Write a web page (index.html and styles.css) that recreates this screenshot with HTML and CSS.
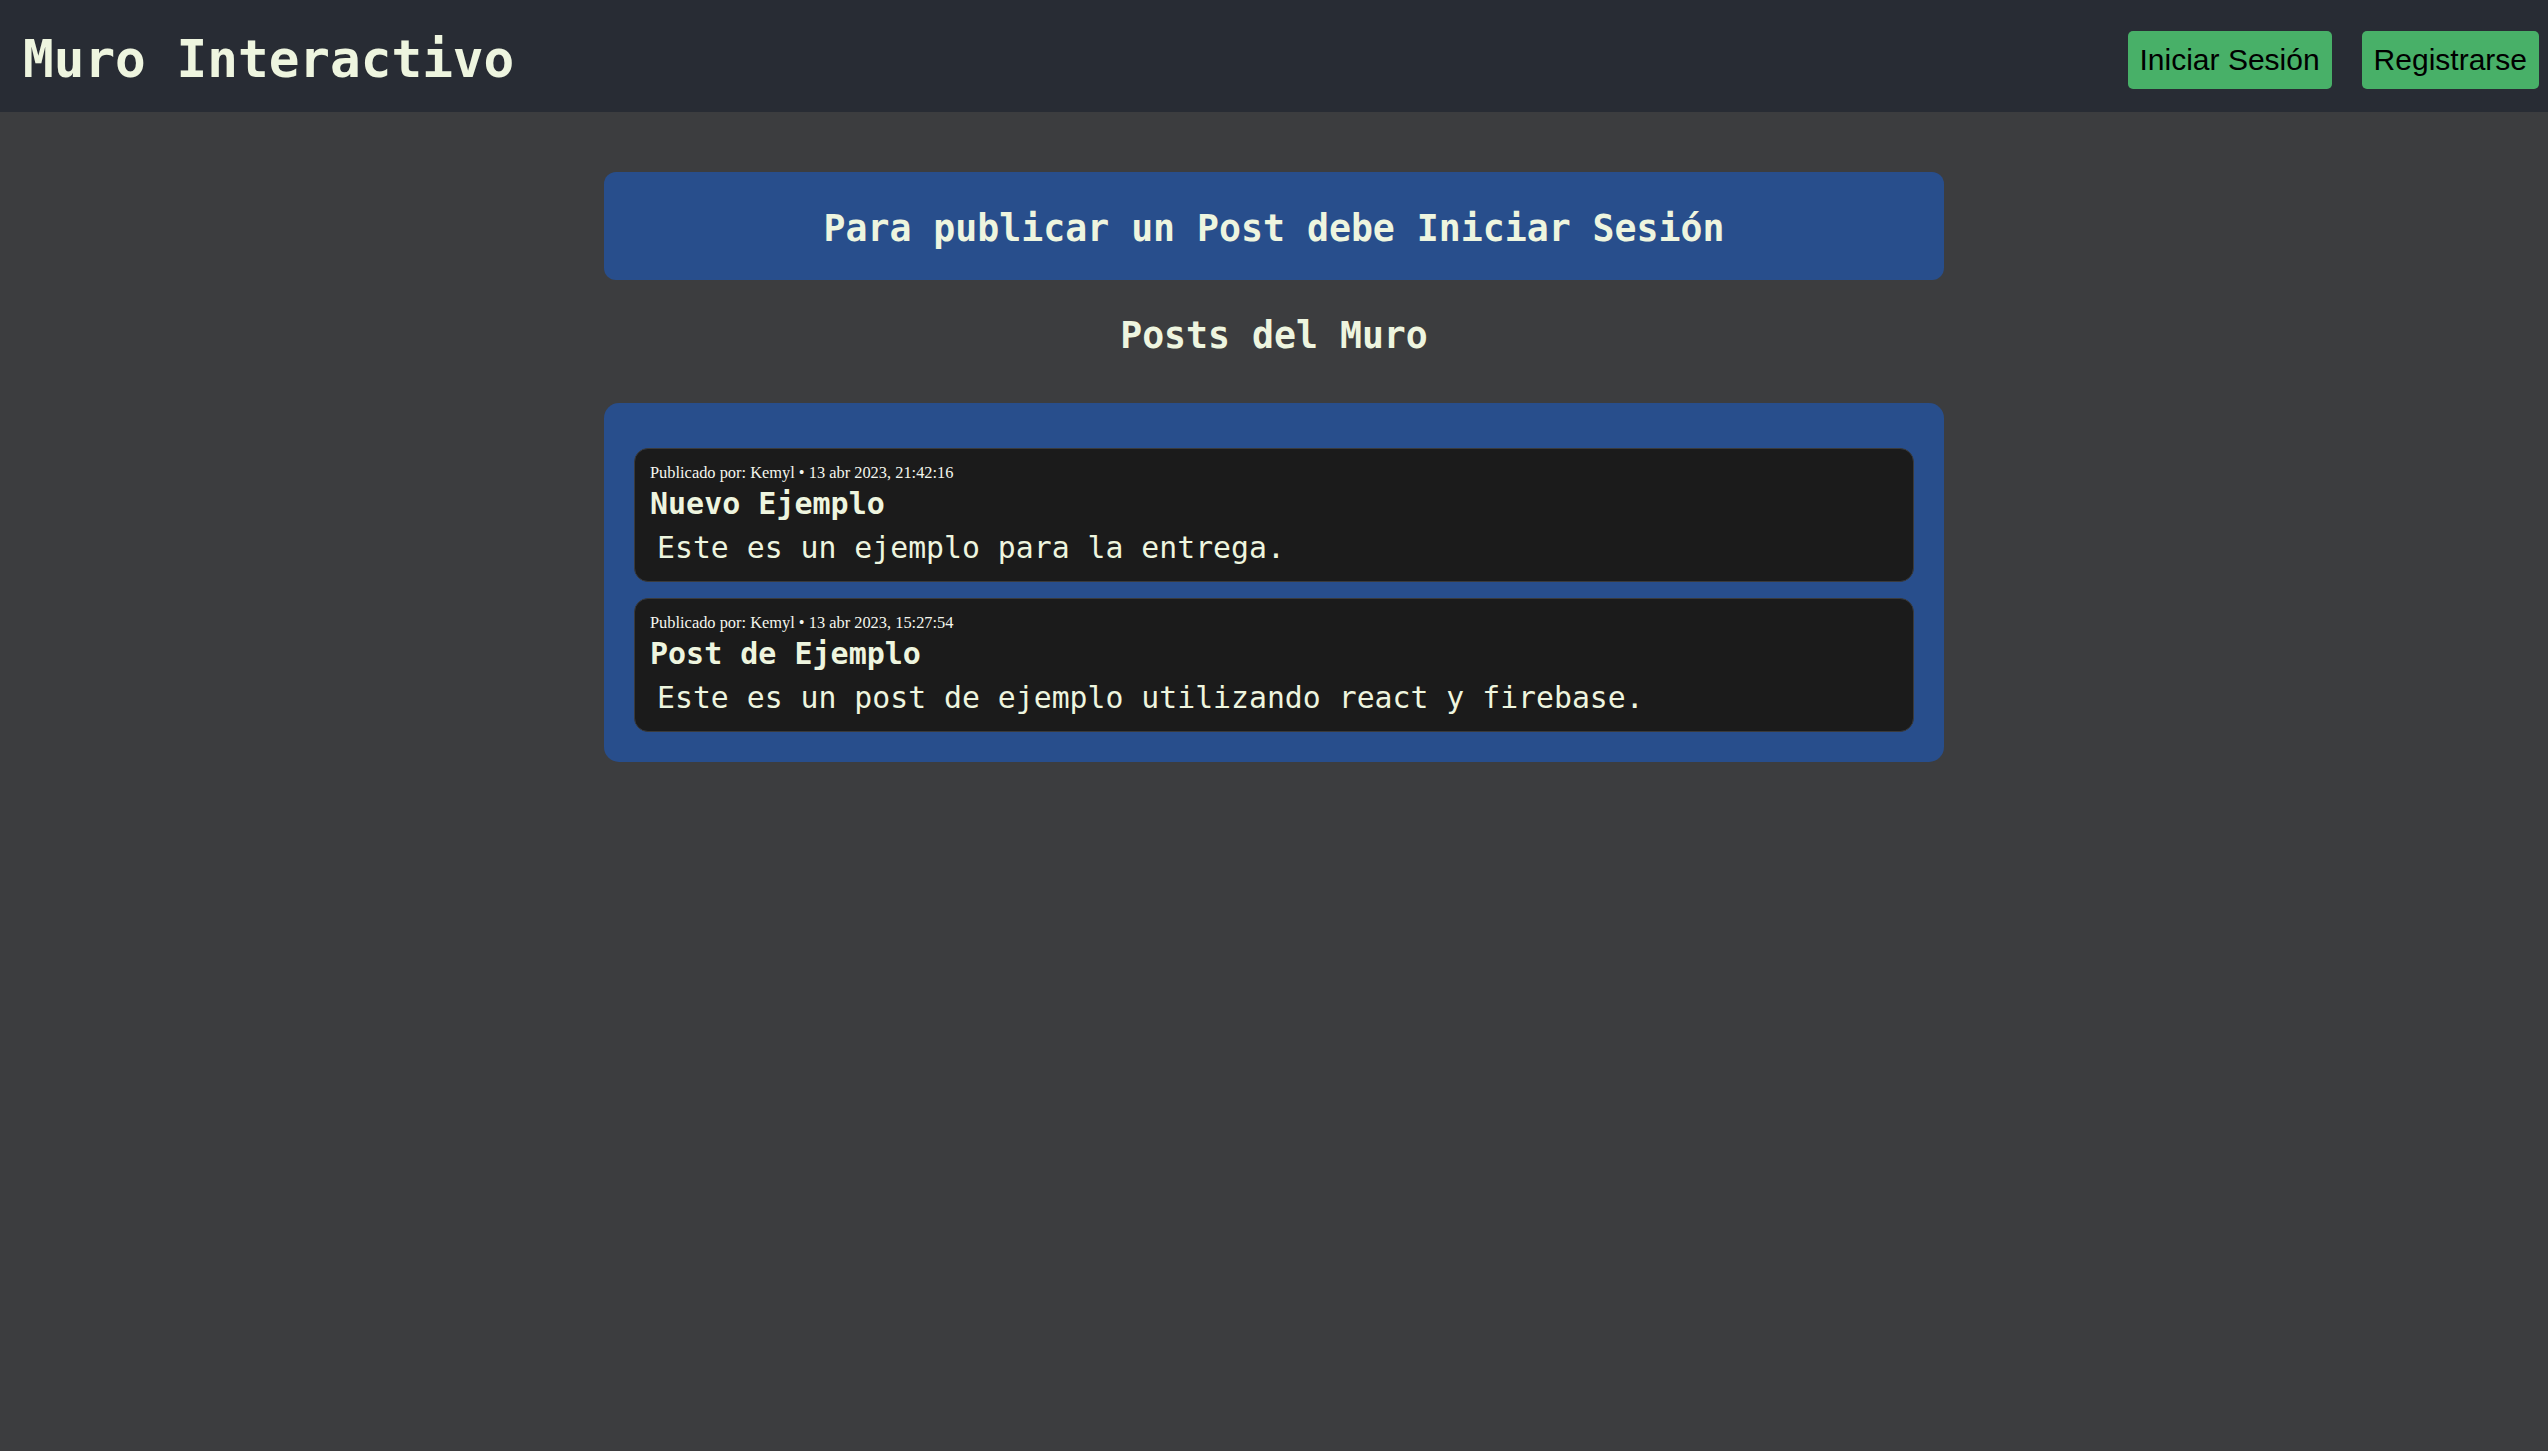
FILE: index.html
```html
<!DOCTYPE html>
<html lang="es">
<head>
<meta charset="utf-8">
<title>Muro Interactivo</title>
<link rel="stylesheet" href="styles.css">
</head>
<body>
<header class="topbar">
  <h1 class="brand">Muro Interactivo</h1>
  <nav class="auth">
    <button class="btn">Iniciar Sesión</button>
    <button class="btn">Registrarse</button>
  </nav>
</header>
<main class="content">
  <div class="notice">Para publicar un Post debe Iniciar Sesión</div>
  <h2 class="section-title">Posts del Muro</h2>
  <section class="wall">
    <article class="post">
      <div class="meta">Publicado por: Kemyl • 13 abr 2023, 21:42:16</div>
      <h3 class="post-title">Nuevo Ejemplo</h3>
      <p class="post-body">Este es un ejemplo para la entrega.</p>
    </article>
    <article class="post">
      <div class="meta">Publicado por: Kemyl • 13 abr 2023, 15:27:54</div>
      <h3 class="post-title">Post de Ejemplo</h3>
      <p class="post-body">Este es un post de ejemplo utilizando react y firebase.</p>
    </article>
  </section>
</main>
</body>
</html>
```

FILE: styles.css
```css
html, body {
  margin: 0;
  padding: 0;
}

body {
  background: #3c3d3f;
  min-height: 100vh;
  font-family: "DejaVu Sans Mono", "Liberation Mono", monospace;
  color: #eef5df;
}

.topbar {
  height: 112px;
  background: #282c34;
  display: flex;
  align-items: center;
  justify-content: space-between;
  padding: 0 9px 0 23px;
  box-sizing: border-box;
}

.brand {
  margin: 8px 0 0;
  font-size: 51px;
  line-height: 60px;
  font-weight: bold;
  color: #eef5df;
}

.auth {
  display: flex;
  gap: 30px;
  padding-top: 8px;
}

.btn {
  font-family: "Liberation Sans", Arial, sans-serif;
  font-size: 30px;
  line-height: 34px;
  padding: 12px;
  border: none;
  border-radius: 5px;
  background: #48b068;
  color: #000;
  cursor: pointer;
}

.content {
  width: 1340px;
  margin: 0 auto;
  padding-top: 60px;
}

.notice {
  background: #284e8c;
  border-radius: 12px;
  padding: 35px 0 29px;
  text-align: center;
  font-size: 36.5px;
  line-height: 44px;
  font-weight: bold;
}

.section-title {
  margin: 34px 0 45px;
  text-align: center;
  font-size: 36.5px;
  line-height: 44px;
  font-weight: bold;
}

.wall {
  background: #284e8c;
  border-radius: 15px;
  padding: 45px 30px 30px;
  display: flex;
  flex-direction: column;
  gap: 16px;
}

.post {
  background: #1b1b1b;
  border: 1px solid #3a3a3a;
  border-radius: 14px;
  padding: 15px;
}

.meta {
  font-family: "Liberation Serif", "Times New Roman", serif;
  font-size: 16.4px;
  line-height: 18px;
  color: #f4f6ee;
}

.post-title {
  margin: 4px 0 0;
  font-size: 30px;
  line-height: 36px;
  font-weight: bold;
}

.post-body {
  margin: 8px 0 0;
  padding-left: 7px;
  font-size: 29.8px;
  line-height: 36px;
}
```
